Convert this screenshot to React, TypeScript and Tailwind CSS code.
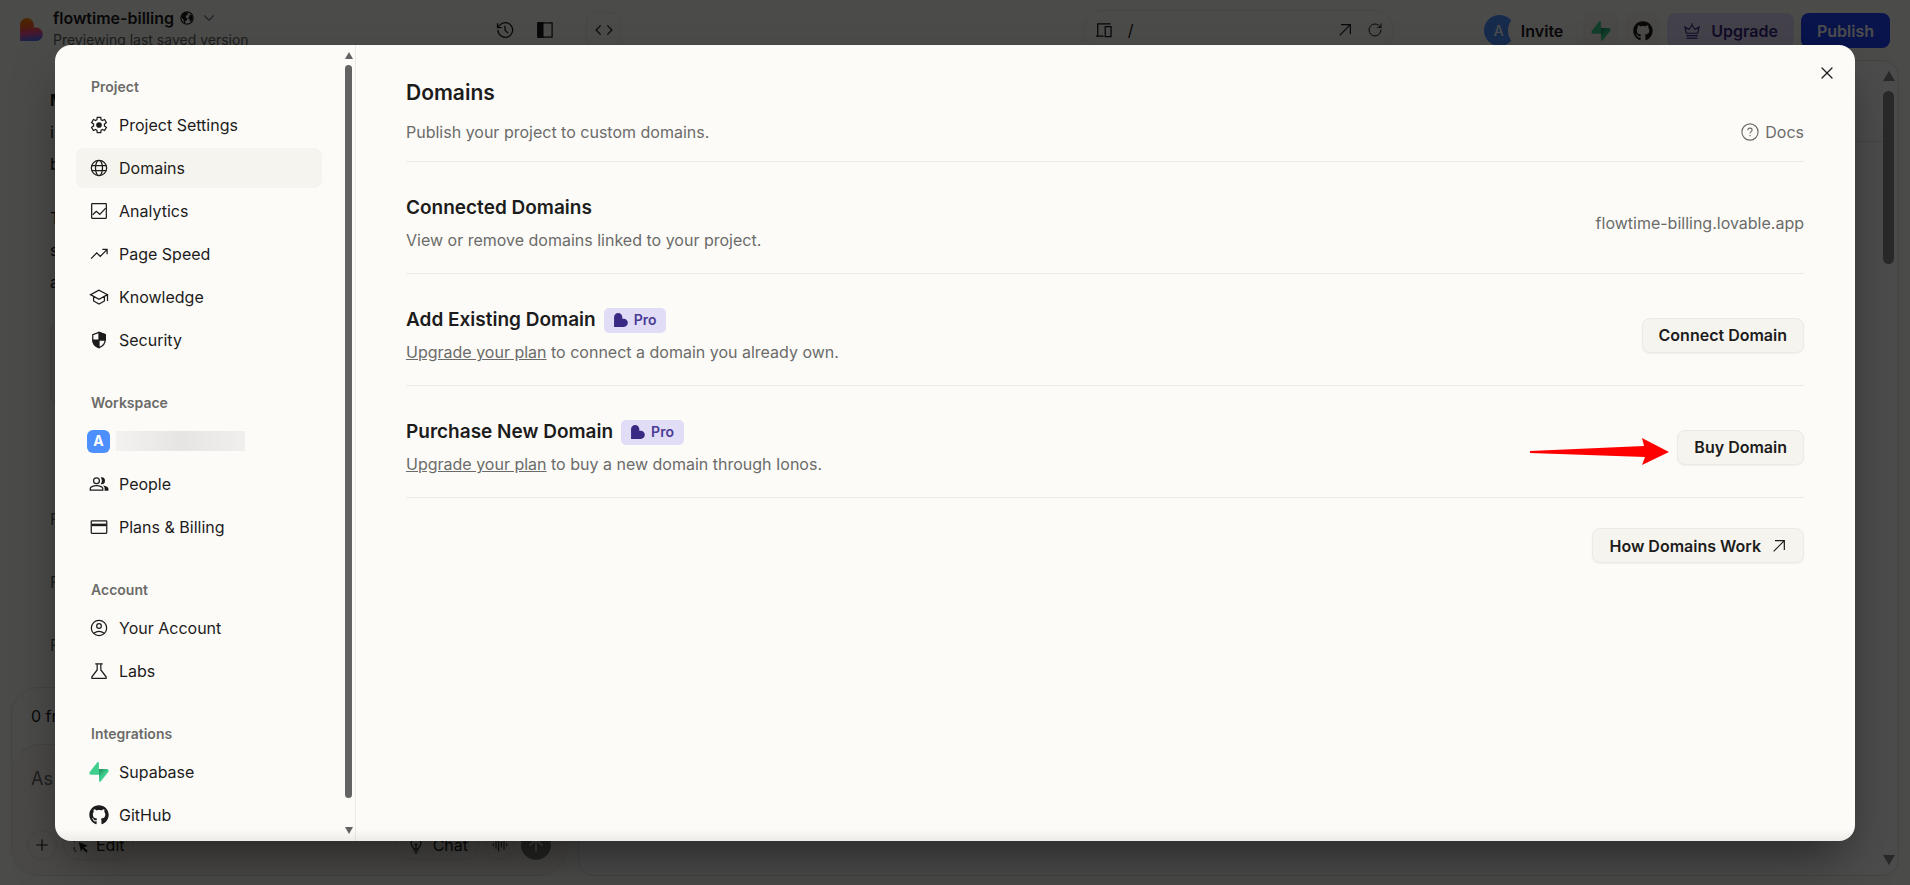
import React from "react";
import { FaGithub } from "react-icons/fa";
import { ArrowUp, AudioLines, ChevronDown, Plus, RotateCw, X } from "lucide-react";

interface NavItem {
  label: string;
  icon: React.ReactNode;
  active?: boolean;
}

interface NavSection {
  title: string;
  items: NavItem[];
}

const Icon: React.FC<{ children: React.ReactNode; className?: string }> = ({
  children,
  className = "size-5",
}) => (
  <svg
    className={`shrink-0 ${className}`}
    viewBox="0 0 24 24"
    fill="none"
    stroke="currentColor"
    strokeWidth={1.5}
    aria-hidden="true"
  >
    {children}
  </svg>
);

const SupabaseLogo: React.FC<{ className?: string }> = ({ className = "size-5" }) => (
  <svg className={`shrink-0 ${className}`} viewBox="0 0 109 113" fill="none" aria-hidden="true">
    <defs>
      <linearGradient id="supabase-shade" x1="54" y1="40" x2="84" y2="70" gradientUnits="userSpaceOnUse">
        <stop stopColor="#1f8a5b" />
        <stop offset="1" stopColor="#3ecf8e" />
      </linearGradient>
    </defs>
    <path
      d="M63.7 110.3C60.8 113.9 55 111.9 55 107.3L54 40.1h45.2c8.2 0 12.8 9.4 7.7 15.8L63.7 110.3Z"
      fill="url(#supabase-shade)"
    />
    <path
      d="M45.3 2.1C48.2-1.5 54 .4 54 5l.5 67.3H9.8c-8.2 0-12.7-9.5-7.6-15.9L45.3 2.1Z"
      fill="#3ecf8e"
    />
  </svg>
);

const HeartLogo: React.FC<{ className: string; fill: string }> = ({ className, fill }) => (
  <svg className={`shrink-0 ${className}`} viewBox="0 0 121 122" aria-hidden="true">
    <defs>
      <linearGradient id="heart-gradient" x1="45" y1="0" x2="60" y2="122" gradientUnits="userSpaceOnUse">
        <stop stopColor="#ff8a00" />
        <stop offset="0.4" stopColor="#ff5a2c" />
        <stop offset="0.65" stopColor="#f04a9b" />
        <stop offset="1" stopColor="#4b73ff" />
      </linearGradient>
    </defs>
    <path
      d="M36.1 0C56 0 72.1 16.2 72.1 36.1v13.7h12c20 0 36.1 16.2 36.1 36.1S104.1 122 84.1 122H0V36.1C0 16.2 16.2 0 36.1 0Z"
      fill={fill}
    />
  </svg>
);

const ArrowOut: React.FC<{ className: string }> = ({ className }) => (
  <Icon className={className}>
    <path d="M4 20 20 4M6 4h14v14" strokeWidth={1.8} />
  </Icon>
);

const sections: NavSection[] = [
  {
    title: "Project",
    items: [
      {
        label: "Project Settings",
        icon: (
          <Icon>
            <path d="m9.9 21.2-.4-2.9q-.8-.3-1.5-.9l-2.7 1.2-2.2-3.7 2.4-1.8q-.1-.5-.1-1.1t.1-1.1L3.1 9.1l2.2-3.7L8 6.6q.7-.6 1.5-.9l.4-2.9h4.2l.4 2.9q.8.3 1.5.9l2.7-1.2 2.2 3.7-2.4 1.8q.1.5.1 1.1t-.1 1.1l2.4 1.8-2.2 3.7-2.7-1.2q-.7.6-1.5.9l-.4 2.9Z" />
            <circle cx="12" cy="12" r="3.4" fill="currentColor" stroke="none" />
          </Icon>
        ),
      },
      {
        label: "Domains",
        active: true,
        icon: (
          <Icon>
            <circle cx="12" cy="12" r="9.2" />
            <ellipse cx="12" cy="12" rx="4.2" ry="9.2" />
            <path d="M3.5 9h17M3.5 15h17" />
          </Icon>
        ),
      },
      {
        label: "Analytics",
        icon: (
          <Icon>
            <rect x="3.2" y="3.2" width="17.6" height="17.6" rx="0.6" />
            <path d="m4.5 16.5 4.2-4.2 4.3 3.7L20 8.5" />
          </Icon>
        ),
      },
      {
        label: "Page Speed",
        icon: (
          <Icon>
            <path d="m2.5 17.5 6.8-6.8 4.2 4.2 8-8.2M16 6.5h5.7v5.7" />
          </Icon>
        ),
      },
      {
        label: "Knowledge",
        icon: (
          <Icon>
            <path d="M12 3.8 1.8 9.2 12 14.7l10.2-5.5L12 3.8ZM5.5 11.3v5.5l6.5 3.6 6.5-3.6v-5.5M22.2 9.2v7.6" />
          </Icon>
        ),
      },
      {
        label: "Security",
        icon: (
          <Icon>
            <path d="M12 2.8 4.5 5.6v5.6c0 4.6 3 8.6 7.5 10 4.5-1.4 7.5-5.4 7.5-10V5.6L12 2.8Z" />
            <path
              d="M12 2.8v9.2h7.5V5.6L12 2.8ZM12 12H4.5c.4 4.3 3.3 7.9 7.5 9.2V12Z"
              fill="currentColor"
            />
          </Icon>
        ),
      },
    ],
  },
  {
    title: "Workspace",
    items: [
      {
        label: "People",
        icon: (
          <Icon>
            <circle cx="9" cy="8" r="3.5" />
            <path d="M1.5 19.2v-1.7c0-1 .5-1.7 1.4-2.1 3.9-1.9 8.3-1.9 12.2 0 .9.4 1.4 1.1 1.4 2.1v1.7h-15Z" />
            <path
              d="M14 11.9c3.4 1 5.2-1 5.2-3.9S17.4 3.4 14 4.1c2 2.2 2 5.6 0 7.8ZM18.7 20v-2.6c0-1.5-.7-2.5-2-3.5 2 .3 4 .8 5.3 1.6.9.5 1.3 1.2 1.3 2.1V20h-4.6Z"
              fill="currentColor"
              stroke="none"
            />
          </Icon>
        ),
      },
      {
        label: "Plans & Billing",
        icon: (
          <Icon>
            <rect x="2.7" y="4.5" width="18.6" height="15" rx="0.8" />
            <path d="M3 9.5h18" strokeWidth={3} />
          </Icon>
        ),
      },
    ],
  },
  {
    title: "Account",
    items: [
      {
        label: "Your Account",
        icon: (
          <Icon>
            <circle cx="12" cy="12" r="9.2" />
            <circle cx="12" cy="9.5" r="2.8" />
            <path d="M5.7 18.4c3.8-2.9 8.8-2.9 12.6 0" />
          </Icon>
        ),
      },
      {
        label: "Labs",
        icon: (
          <Icon>
            <path d="M7.5 3.5h9M9.8 3.5v7.2L3.5 19v1.8h17V19l-6.3-8.3V3.5" />
          </Icon>
        ),
      },
    ],
  },
  {
    title: "Integrations",
    items: [
      { label: "Supabase", icon: <SupabaseLogo /> },
      { label: "GitHub", icon: <FaGithub className="size-5 shrink-0" /> },
    ],
  },
];

const ProBadge: React.FC = () => (
  <span className="flex h-[25px] items-center gap-[6px] rounded-[5px] bg-[#e1ddf7] px-[10px] text-sm font-semibold text-[#4a3b94]">
    <HeartLogo className="size-[14px]" fill="#3b2a84" />
    Pro
  </span>
);

const PanelButton: React.FC<{ children: React.ReactNode }> = ({ children }) => (
  <button
    type="button"
    className="flex h-[35px] items-center gap-[10px] rounded-lg border border-[#eceae4] bg-[#f6f4ee] px-4 text-base font-semibold whitespace-nowrap shadow-xs"
  >
    {children}
  </button>
);

const DomainRow: React.FC<{
  title: string;
  badge?: boolean;
  description: React.ReactNode;
  children: React.ReactNode;
}> = ({ title, badge, description, children }) => (
  <div className="flex items-center justify-between border-b border-[#eceae6] pt-8 pb-[21px]">
    <div>
      <div className="flex h-7 items-center gap-2">
        <h3 className="text-[19px] font-semibold">{title}</h3>
        {badge && <ProBadge />}
      </div>
      <p className="mt-[6px] text-base text-[#6b6b69]">{description}</p>
    </div>
    {children}
  </div>
);

const Sidebar: React.FC = () => (
  <nav className="flex w-[301px] shrink-0 border-r border-[#eceae6]">
    <div className="flex-1 overflow-hidden pt-8 pr-[23px] pl-[21px]">
      {sections.map((section) => (
        <div key={section.title} className="mb-[33px]">
          <h2 className="mb-2 pl-[15px] text-sm leading-5 font-semibold text-[#6b6b69]">
            {section.title}
          </h2>
          <ul className="flex flex-col gap-[3px]">
            {section.title === "Workspace" && (
              <li>
                <a href="#workspace" aria-label="Workspace" className="flex h-10 items-center gap-[6px] pl-[11px]">
                  <span className="flex size-[23px] items-center justify-center rounded-md bg-[#4d8ffd] text-sm font-bold text-white">
                    A
                  </span>
                  <span className="h-5 w-[129px] bg-linear-to-r from-[#f3f2f0] via-[#e6e5e3] to-[#f0efed]"></span>
                </a>
              </li>
            )}
            {section.items.map((item) => (
              <li key={item.label}>
                <a
                  href="#"
                  className={`flex h-10 items-center gap-[10px] rounded-lg px-[13px] text-base ${
                    item.active ? "bg-[#f6f4ee]" : ""
                  }`}
                >
                  {item.icon}
                  {item.label}
                </a>
              </li>
            ))}
          </ul>
        </div>
      ))}
    </div>
    {/* Scrollbar */}
    <div className="flex w-[10px] flex-col items-start gap-[6px] py-[7px]">
      <svg className="h-[7px] w-2" viewBox="0 0 8 7" fill="#636363">
        <path d="M4 0 8 7H0Z" />
      </svg>
      <div className="w-[7px] flex-1 rounded-full bg-[#636363]"></div>
      <svg className="mt-[23px] h-[7px] w-2" viewBox="0 0 8 7" fill="#636363">
        <path d="M4 7 8 0H0Z" />
      </svg>
    </div>
  </nav>
);

const SettingsDialog: React.FC = () => (
  <div
    role="dialog"
    aria-label="Domains"
    className="relative flex w-full overflow-hidden rounded-2xl bg-[#fcfbf8] text-[#1c1c1c] shadow-2xl shadow-black/50"
  >
    <Sidebar />
    <section className="flex-1 pt-[34px] pr-[51px] pl-[50px]">
      <h1 className="text-[21px] leading-7 font-semibold">Domains</h1>
      <div className="mt-[13px] flex items-center justify-between border-b border-[#eceae6] pb-[17px] text-base text-[#6b6b69]">
        <p>Publish your project to custom domains.</p>
        <a href="#docs" className="flex items-center gap-[6px]">
          <Icon className="size-[18px]">
            <circle cx="12" cy="12" r="10.8" />
            <path d="M9.2 9.6c0-1.6 1.2-2.7 2.8-2.7s2.8 1 2.8 2.5c0 2-2.8 2.3-2.8 4.7M12 16v1.8" />
          </Icon>
          Docs
        </a>
      </div>

      <DomainRow
        title="Connected Domains"
        description="View or remove domains linked to your project."
      >
        <span className="text-base text-[#6b6b69]">flowtime-billing.lovable.app</span>
      </DomainRow>
      <DomainRow
        title="Add Existing Domain"
        badge
        description={
          <>
            <a href="#upgrade" className="underline">Upgrade your plan</a> to connect a domain you already own.
          </>
        }
      >
        <PanelButton>Connect Domain</PanelButton>
      </DomainRow>
      <DomainRow
        title="Purchase New Domain"
        badge
        description={
          <>
            <a href="#upgrade" className="underline">Upgrade your plan</a> to buy a new domain through Ionos.
          </>
        }
      >
        <div className="relative">
          <svg
            className="absolute top-2 right-full mr-2 h-[27px] w-[139px]"
            viewBox="0 0 139 27"
            fill="#ff0000"
            aria-hidden="true"
          >
            <path d="M0 13 114 8 112 0l27 14-27 13 3-8L0 15Z" />
          </svg>
          <PanelButton>Buy Domain</PanelButton>
        </div>
      </DomainRow>

      <div className="mt-[30px] flex justify-end">
        <PanelButton>
          How Domains Work
          <ArrowOut className="size-4" />
        </PanelButton>
      </div>
    </section>
    <button type="button" aria-label="Close" className="absolute top-[18px] right-[18px]">
      <X className="size-5" strokeWidth={1.5} />
    </button>
    {/* Soft edge along the bottom */}
    <div className="pointer-events-none absolute inset-x-0 bottom-0 h-3 bg-linear-to-t from-black/6 to-transparent"></div>
  </div>
);

const EditorHeader: React.FC = () => (
  <header className="flex h-[60px] shrink-0 items-start justify-between pr-5 pl-5">
    <div className="flex w-[601px] items-start justify-between">
      <div className="flex gap-[10px]">
        <HeartLogo className="mt-[18px] size-[23px]" fill="url(#heart-gradient)" />
        <div className="pt-[7px]">
          <div className="flex h-[22px] items-center gap-[6px]">
            <span className="text-base font-semibold">flowtime-billing</span>
            <Icon className="size-[14px]">
              <circle cx="12" cy="12" r="10.5" strokeWidth={2} />
              <path
                d="M2 9c1-4 5-7 9-7l3 1-1 4-3 1v3l3 2-1 3-3 1v4l-2-1-1-5-4-4V9ZM16 6l4 1 2 5-2 5-3 1-1-4-2-2 2-3V6Z"
                fill="currentColor"
                stroke="none"
              />
            </Icon>
            <ChevronDown className="size-[18px] text-gray-500" strokeWidth={1.5} />
          </div>
          <p className="text-sm leading-[22px] text-[#5f5f5d]">Previewing last saved version</p>
        </div>
      </div>
      <div className="flex items-start gap-5 pt-3">
        <button type="button" aria-label="History" className="pt-2">
          <Icon>
            <path d="M3.5 12a8.8 8.8 0 1 0 2.2-5.8L3 9M3 4v5h5M12 7v5.3l3.7 3.5" />
          </Icon>
        </button>
        <button type="button" aria-label="Toggle panel" className="pt-2">
          <Icon>
            <rect x="3.5" y="3.5" width="17" height="17" />
            <path d="M3.5 3.5h6v17h-6Z" fill="currentColor" />
          </Icon>
        </button>
        <button
          type="button"
          aria-label="Code"
          className="ml-[11px] flex size-[35px] items-center justify-center rounded-lg border border-[#f0eee8]"
        >
          <Icon>
            <path d="m8 6.5-5.5 5.5L8 17.500M16 6.500l5.500 5.500-5.500 5.500" />
          </Icon>
        </button>
      </div>
    </div>

    <div className="flex items-start">
      <div className="mt-[10px] mr-[90px] flex h-10 w-[311px] items-center gap-[14px] rounded-full border border-[#eceae4] px-[10px]">
        <Icon>
          <path d="M20 4.500H4.500V19M2.500 19.200h9M13.500 8h7v12h-7Z" />
        </Icon>
        <span className="flex-1 text-base">/</span>
        <ArrowOut className="size-4" />
        <RotateCw className="size-4" strokeWidth={1.5} />
      </div>
      <div className="flex items-start gap-[7px] pt-[13px]">
        <div className="flex items-center">
          <span className="-mr-[7px] flex size-[31px] items-center rounded-full bg-[#4d8ffd] pl-[10px] text-sm font-medium text-white">
            A
          </span>
          <button type="button" className="h-[35px] rounded-full bg-[#fcfbf8] px-[13px] text-base font-semibold">
            Invite
          </button>
        </div>
        <button type="button" aria-label="Supabase" className="flex size-[35px] items-center justify-center rounded-lg bg-[#f7f4ed]">
          <SupabaseLogo />
        </button>
        <button type="button" aria-label="GitHub" className="flex size-[35px] items-center justify-center rounded-lg bg-[#f7f4ed]">
          <FaGithub className="size-5" />
        </button>
        <button type="button" className="flex h-[35px] items-center gap-[10px] rounded-lg bg-[#e1ddf7] px-4 text-base font-semibold text-[#3b2a84]">
          <Icon className="size-[18px]">
            <path d="M4.500 15 2.500 6.500 8 10l4-6 4 6 5.500-3.500L19.500 15h-15ZM4.500 18.200h15M4.500 21.500h15M12 1.500V4" />
          </Icon>
          Upgrade
        </button>
        <button type="button" className="h-[35px] rounded-lg bg-[#1e40ff] px-4 text-base font-semibold text-white">
          Publish
        </button>
      </div>
    </div>
  </header>
);

const ChatColumn: React.FC = () => (
  <aside className="flex w-[567px] shrink-0 flex-col pl-[11px]">
    <div className="flex-1 pl-[39px] text-base leading-8">
      <div className="pt-6">
        <p className="font-bold">M</p>
        <p>i</p>
        <p>b</p>
      </div>
      <div className="pt-[22px]">
        <p>T</p>
        <p>s</p>
        <p>a</p>
      </div>
      <div className="mt-[22px] h-[86px] rounded-xl border border-[#e2ded8] bg-[#f4efe8]"></div>
      <ul className="mt-[97px] flex flex-col gap-[31px] text-[#5f5f5d]">
        <li>F</li>
        <li>F</li>
        <li>F</li>
      </ul>
    </div>
    <div className="rounded-[28px] border border-[#e7e4dd]">
      <p className="px-[19px] py-4 text-base">0 fr</p>
      <div className="flex h-[131px] flex-col justify-between rounded-[28px] border-t border-[#e7e4dd] bg-[#f7f4ed] px-[15px] pt-5 pb-[15px]">
        <input
          aria-label="Prompt"
          placeholder="As"
          className="px-1 text-lg placeholder:text-[#6b6b69]"
        />
        <div className="flex items-center gap-[6px]">
          <button type="button" aria-label="Add" className="flex size-[30px] items-center justify-center rounded-full border border-[#e7e4dd]">
            <Plus className="size-[18px]" strokeWidth={1.5} />
          </button>
          <button type="button" className="mr-auto flex h-[30px] items-center gap-[6px] rounded-full border border-[#e7e4dd] px-2 text-base">
            <Icon className="size-[18px]">
              <path d="M3 8V3h5M3 15v5h5M16 3h5" strokeDasharray="3 2" />
              <path d="m9 8 12 5-5 2 5 5-2 2-5-5-2 4Z" fill="currentColor" stroke="none" />
            </Icon>
            Edit
          </button>
          <button type="button" className="flex h-[30px] items-center gap-2 rounded-full border border-[#e7e4dd] px-[10px] text-base">
            <Icon className="size-[18px]">
              <path d="M9 17.500c0-2.500-3.500-4-3.500-8a6.500 6.500 0 0 1 13 0c0 4-3.500 5.500-3.500 8H9ZM9 20h6M10.500 22.500h3M12 17v-5l-2-2M12 12l2-2" />
            </Icon>
            Chat
          </button>
          <button type="button" aria-label="Voice" className="flex size-[30px] items-center justify-center rounded-full border border-[#e7e4dd]">
            <AudioLines className="size-4" strokeWidth={1.5} />
          </button>
          <button type="button" aria-label="Send" className="flex size-[30px] items-center justify-center rounded-full bg-[#7d7d7a] text-[#f0efec]">
            <ArrowUp className="size-5" strokeWidth={2} />
          </button>
        </div>
      </div>
    </div>
  </aside>
);

const Preview: React.FC = () => (
  <main className="mr-[11px] ml-[11px] flex flex-1 rounded-2xl border border-[#e7e4dd] bg-white">
    <div className="flex-1">
      <div className="h-[81px] border-b border-[#e5e7eb]"></div>
    </div>
    <div className="flex w-[15px] flex-col items-start gap-[10px] py-[10px]">
      <svg className="h-[10px] w-3" viewBox="0 0 12 10" fill="#8b8b8b">
        <path d="M6 0 12 10H0Z" />
      </svg>
      <div className="h-[173px] w-[11px] rounded-full bg-[#8b8b8b]"></div>
      <svg className="mt-auto h-[10px] w-3" viewBox="0 0 12 10" fill="#8b8b8b">
        <path d="M6 10 12 0H0Z" />
      </svg>
    </div>
  </main>
);

const App: React.FC = () => {
  return (
    <div className="relative flex h-screen flex-col overflow-hidden bg-[#fcfbf8] font-['Inter',sans-serif] text-[#1c1c1c]">
      <EditorHeader />
      <div className="flex flex-1 pb-[9px]">
        <ChatColumn />
        <Preview />
      </div>
      <div className="absolute inset-0 flex bg-black/70 px-[55px] pt-[45px] pb-11">
        <SettingsDialog />
      </div>
    </div>
  );
};

export default App;
